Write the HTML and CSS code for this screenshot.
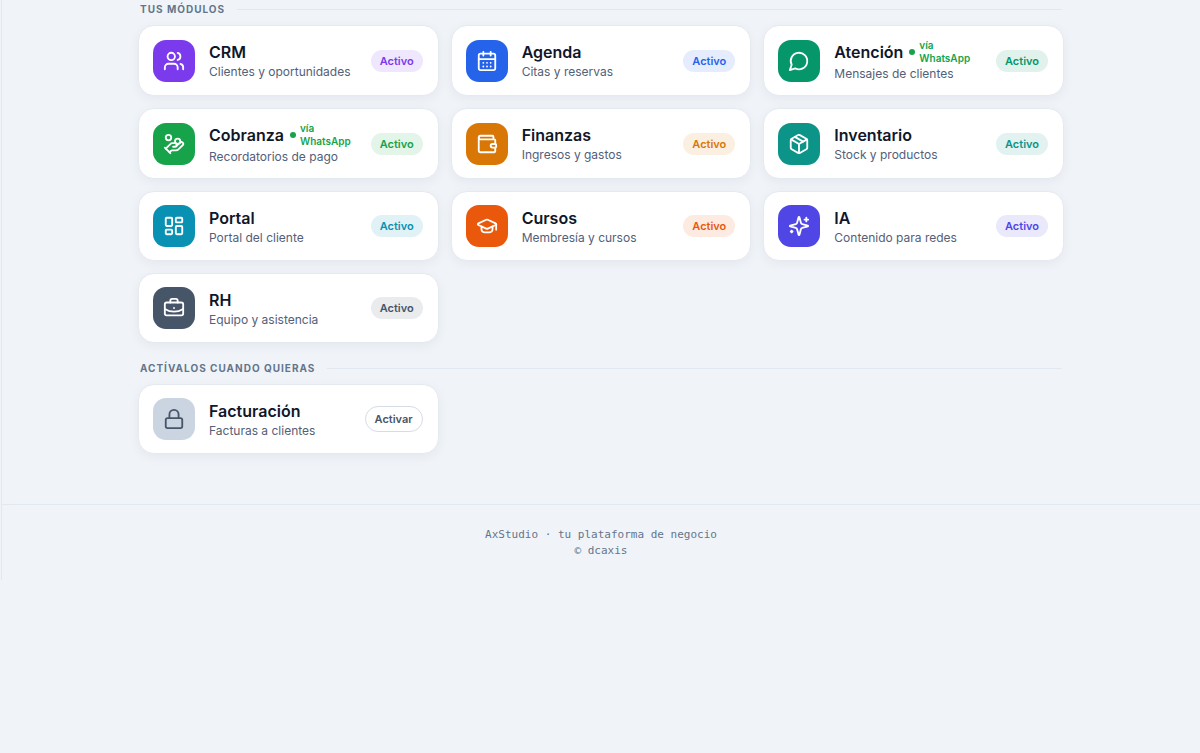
FILE: index.html
```html
<!DOCTYPE html>
<html lang="es">
<head>
<meta charset="utf-8">
<meta name="viewport" content="width=device-width, initial-scale=1">
<title>AxStudio</title>
<link rel="stylesheet" href="styles.css">
</head>
<body>
<div class="shell">
  <main class="content">
    <section class="group">
      <h2 class="group-title">Tus módulos</h2>
      <div class="grid">
        <a class="card violet" href="#crm">
          <span class="tile"><svg class="icon" viewBox="0 0 24 24"><path d="M16 21v-2a4 4 0 0 0-4-4H6a4 4 0 0 0-4 4v2"/><circle cx="9" cy="7" r="4"/><path d="M22 21v-2a4 4 0 0 0-3-3.870"/><path d="M16 3.130a4 4 0 0 1 0 7.750"/></svg></span>
          <span class="text"><span class="name">CRM</span><span class="desc">Clientes y oportunidades</span></span>
          <span class="badge">Activo</span>
        </a>
        <a class="card blue" href="#agenda">
          <span class="tile"><svg class="icon" viewBox="0 0 24 24"><path d="M8 2v4M16 2v4"/><rect x="3" y="4" width="18" height="18" rx="2"/><path d="M3 10h18M8 14h.01M12 14h.01M16 14h.01M8 18h.01M12 18h.01M16 18h.01"/></svg></span>
          <span class="text"><span class="name">Agenda</span><span class="desc">Citas y reservas</span></span>
          <span class="badge">Activo</span>
        </a>
        <a class="card emerald" href="#atencion">
          <span class="tile"><svg class="icon" viewBox="0 0 24 24"><path d="M7.900 20A9 9 0 1 0 4 16.100L2 22Z"/></svg></span>
          <span class="text"><span class="name">Atención <span class="via"><span>vía<br>WhatsApp</span></span></span><span class="desc">Mensajes de clientes</span></span>
          <span class="badge">Activo</span>
        </a>
        <a class="card green" href="#cobranza">
          <span class="tile"><svg class="icon" viewBox="0 0 24 24"><path d="M11 15h2a2 2 0 1 0 0-4h-3c-.6 0-1.100.2-1.400.6L3 17"/><path d="m7 21 1.600-1.400c.3-.4.800-.6 1.400-.6h4c1.100 0 2.100-.4 2.800-1.200l4.600-4.400a2 2 0 0 0-2.750-2.910l-4.200 3.900"/><path d="m2 16 6 6"/><circle cx="16" cy="9" r="2.900"/><circle cx="6" cy="5" r="3"/></svg></span>
          <span class="text"><span class="name">Cobranza <span class="via"><span>vía<br>WhatsApp</span></span></span><span class="desc">Recordatorios de pago</span></span>
          <span class="badge">Activo</span>
        </a>
        <a class="card amber" href="#finanzas">
          <span class="tile"><svg class="icon" viewBox="0 0 24 24"><path d="M19 7V4a1 1 0 0 0-1-1H5a2 2 0 0 0 0 4h15a1 1 0 0 1 1 1v4h-3a2 2 0 0 0 0 4h3a1 1 0 0 0 1-1v-2a1 1 0 0 0-1-1"/><path d="M3 5v14a2 2 0 0 0 2 2h15a1 1 0 0 0 1-1v-4"/></svg></span>
          <span class="text"><span class="name">Finanzas</span><span class="desc">Ingresos y gastos</span></span>
          <span class="badge">Activo</span>
        </a>
        <a class="card teal" href="#inventario">
          <span class="tile"><svg class="icon" viewBox="0 0 24 24"><path d="M11 21.730a2 2 0 0 0 2 0l7-4A2 2 0 0 0 21 16V8a2 2 0 0 0-1-1.730l-7-4a2 2 0 0 0-2 0l-7 4A2 2 0 0 0 3 8v8a2 2 0 0 0 1 1.730z"/><path d="M12 22V12"/><path d="M3.290 7 12 12l8.710-5"/><path d="m7.500 4.270 9 5.150"/></svg></span>
          <span class="text"><span class="name">Inventario</span><span class="desc">Stock y productos</span></span>
          <span class="badge">Activo</span>
        </a>
        <a class="card cyan" href="#portal">
          <span class="tile"><svg class="icon" viewBox="0 0 24 24"><rect x="3" y="3" width="7" height="9" rx="1"/><rect x="14" y="3" width="7" height="5" rx="1"/><rect x="14" y="12" width="7" height="9" rx="1"/><rect x="3" y="16" width="7" height="5" rx="1"/></svg></span>
          <span class="text"><span class="name">Portal</span><span class="desc">Portal del cliente</span></span>
          <span class="badge">Activo</span>
        </a>
        <a class="card orange" href="#cursos">
          <span class="tile"><svg class="icon" viewBox="0 0 24 24"><path d="M21.420 10.922a1 1 0 0 0-.019-1.838L12.830 5.180a2 2 0 0 0-1.660 0L2.600 9.080a1 1 0 0 0 0 1.832l8.570 3.908a2 2 0 0 0 1.660 0z"/><path d="M22 10v6"/><path d="M6 12.500V16a6 3 0 0 0 12 0v-3.500"/></svg></span>
          <span class="text"><span class="name">Cursos</span><span class="desc">Membresía y cursos</span></span>
          <span class="badge">Activo</span>
        </a>
        <a class="card indigo" href="#ia">
          <span class="tile"><svg class="icon" viewBox="0 0 24 24"><path d="M9.937 15.500A2 2 0 0 0 8.500 14.063l-6.135-1.582a.5.5 0 0 1 0-.962L8.500 9.936A2 2 0 0 0 9.937 8.500l1.582-6.135a.5.5 0 0 1 .963 0L14.063 8.500A2 2 0 0 0 15.500 9.937l6.135 1.581a.5.5 0 0 1 0 .964L15.500 14.063a2 2 0 0 0-1.437 1.437l-1.582 6.135a.5.5 0 0 1-.963 0z"/><path d="M20 3v4M22 5h-4M4 17v2M5 18H3"/></svg></span>
          <span class="text"><span class="name">IA</span><span class="desc">Contenido para redes</span></span>
          <span class="badge">Activo</span>
        </a>
        <a class="card slate" href="#rh">
          <span class="tile"><svg class="icon" viewBox="0 0 24 24"><path d="M12 12h.01"/><path d="M16 6V4a2 2 0 0 0-2-2h-4a2 2 0 0 0-2 2v2"/><path d="M22 13a18.150 18.150 0 0 1-20 0"/><rect x="2" y="6" width="20" height="14" rx="2"/></svg></span>
          <span class="text"><span class="name">RH</span><span class="desc">Equipo y asistencia</span></span>
          <span class="badge">Activo</span>
        </a>
      </div>
    </section>
    <section class="group">
      <h2 class="group-title">Actívalos cuando quieras</h2>
      <div class="grid">
        <div class="card locked">
          <span class="tile"><svg class="icon" viewBox="0 0 24 24"><rect x="3" y="11" width="18" height="11" rx="2"/><path d="M7 11V7a5 5 0 0 1 10 0v4"/></svg></span>
          <span class="text"><span class="name">Facturación</span><span class="desc">Facturas a clientes</span></span>
          <button class="activate" type="button">Activar</button>
        </div>
      </div>
    </section>
  </main>
  <footer class="footer">AxStudio · tu plataforma de negocio<br>© dcaxis</footer>
</div>
</body>
</html>
```
FILE: styles.css
```css
* {
  box-sizing: border-box;
}

body {
  margin: 0;
  background: #f0f4f9;
  color: #0f172a;
  font-family: Inter, "Liberation Sans", sans-serif;
}

.shell {
  margin-left: 1px;
  border-left: 1px solid #e2e8f0;
}

.content {
  display: flex;
  flex-direction: column;
  gap: 17px;
  max-width: 926px;
  margin: 0 auto;
  padding: 1px 0 50px;
}

.group {
  display: flex;
  flex-direction: column;
  gap: 8px;
}

.group-title {
  display: flex;
  align-items: center;
  gap: 12px;
  margin: 0;
  padding: 0 2px;
  color: #64748b;
  font-size: 10px;
  font-weight: 700;
  line-height: 16px;
  letter-spacing: 1px;
  text-transform: uppercase;
}

.group-title::after {
  content: "";
  flex: 1;
  height: 1px;
  background: #e2e8f0;
}

.grid {
  display: grid;
  grid-template-columns: repeat(3, minmax(0, 1fr));
  gap: 12px;
}

.card {
  display: flex;
  align-items: center;
  gap: 14px;
  padding: 13px 15px 13px 14px;
  border: 1px solid #e5eaf1;
  border-radius: 16px;
  background: #ffffff;
  box-shadow: 0 3px 12px rgba(15, 23, 42, 0.05);
  color: inherit;
  text-decoration: none;
}

.tile {
  display: grid;
  flex: none;
  place-items: center;
  width: 42px;
  height: 42px;
  border-radius: 13px;
  background: var(--tone);
  color: #ffffff;
}

.icon {
  width: 22px;
  height: 22px;
  fill: none;
  stroke: currentColor;
  stroke-width: 2;
  stroke-linecap: round;
  stroke-linejoin: round;
}

.text {
  display: flex;
  flex: 1;
  flex-direction: column;
  min-width: 0;
}

.name {
  display: flex;
  align-items: center;
  gap: 6px;
  font-size: 16px;
  font-weight: 600;
  line-height: 22px;
}

.desc {
  color: #526079;
  font-size: 12px;
  line-height: 17px;
}

.via {
  display: flex;
  align-items: center;
  gap: 4px;
  color: #16a34a;
  font-size: 10px;
  line-height: 13px;
}

.via::before {
  content: "";
  width: 6px;
  height: 6px;
  border-radius: 50%;
  background: currentColor;
}

.badge {
  flex: none;
  padding: 3px 9px;
  border-radius: 11px;
  background: var(--tint);
  color: var(--tone);
  font-size: 11px;
  font-weight: 600;
  line-height: 16px;
}

.activate {
  flex: none;
  padding: 4px 9px;
  border: 1px solid #d5dce6;
  border-radius: 13px;
  background: #ffffff;
  color: #475569;
  font: 600 11px/16px Inter, "Liberation Sans", sans-serif;
}

.violet { --tone: #7c3aed; --tint: #efe7fd; }
.blue { --tone: #2563eb; --tint: #e5ecfd; }
.emerald { --tone: #059669; --tint: #e1f2ed; }
.green { --tone: #16a34a; --tint: #e3f4e9; }
.amber { --tone: #d97706; --tint: #fbefe1; }
.teal { --tone: #0d9488; --tint: #e2f2f1; }
.cyan { --tone: #0891b2; --tint: #e1f2f6; }
.orange { --tone: #ea580c; --tint: #fdebe2; }
.indigo { --tone: #4f46e5; --tint: #eae9fc; }
.slate { --tone: #475569; --tint: #e9ebed; }
.locked { --tone: #cbd5e1; }

.locked .tile {
  color: #475569;
}

.footer {
  padding: 22px 16px 21px;
  border-top: 1px solid #e2e8f0;
  color: #64748b;
  font-family: "DejaVu Sans Mono", "Liberation Mono", monospace;
  font-size: 11px;
  line-height: 16px;
  text-align: center;
}
```
